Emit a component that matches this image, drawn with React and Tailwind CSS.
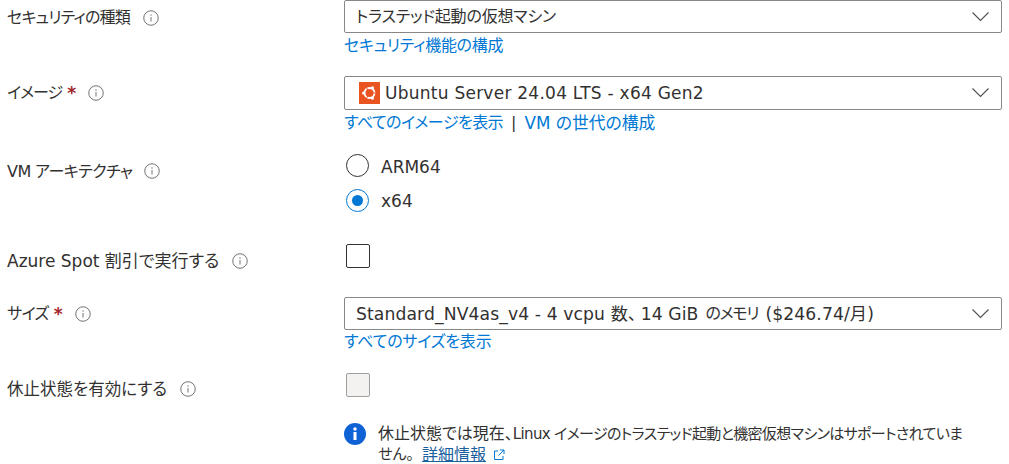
import React from "react";

const FONT = "font-['DejaVu_Sans','Noto_Sans_CJK_JP',sans-serif] [font-feature-settings:'palt']";

function Info({ className = "" }) {
  return (
    <svg width="16" height="16" viewBox="0 0 16 16" className={`shrink-0 ${className}`} fill="none">
      <circle cx="8" cy="8" r="7.25" stroke="#737373" strokeWidth="1" />
      <rect x="7.5" y="7" width="1" height="4.5" fill="#737373" />
      <rect x="7.4" y="4.4" width="1.2" height="1.2" fill="#737373" />
    </svg>
  );
}

function Star() {
  return <span className="ml-[5px] text-[#a4262c] text-[17px] font-bold leading-none">*</span>;
}

function Chevron() {
  return (
    <svg width="17" height="10" viewBox="0 0 17 10" fill="none" className="shrink-0">
      <path d="M0.5 0.5 L8.5 8.5 L16.5 0.5" stroke="#505050" strokeWidth="1.1" />
    </svg>
  );
}

function Select({ children, className = "" }) {
  return (
    <div className={`w-[658px] border border-[#8a8886] rounded-[2px] flex items-center justify-between pl-[11px] pr-[12px] bg-white ${className}`}>
      <div className="flex items-center whitespace-nowrap">{children}</div>
      <Chevron />
    </div>
  );
}

function Ubuntu() {
  return (
    <svg width="21" height="22" viewBox="0 0 21 22" className="ml-[3px] mr-[5px]">
      <rect width="21" height="22" fill="#e95420" />
      <circle cx="10.5" cy="11" r="5" fill="none" stroke="#fff" strokeWidth="1.9" />
      <g fill="none" stroke="#e95420" strokeWidth="1">
        <path d="M13.5 11H17" />
        <path d="M9 8.4L7.2 5.3" />
        <path d="M9 13.6L7.2 16.7" />
      </g>
      <circle cx="4.6" cy="11" r="1.6" fill="#fff" />
      <circle cx="13.4" cy="5.9" r="1.6" fill="#fff" />
      <circle cx="13.4" cy="16.1" r="1.6" fill="#fff" />
    </svg>
  );
}

function Radio({ checked, label, className = "", labelClass = "" }) {
  return (
    <div className={`flex items-start h-[23px] ${className}`}>
      <div className={`w-[23px] h-[23px] rounded-full border flex items-center justify-center ${checked ? "border-[#0078d4]" : "border-[#323130]"}`}>
        {checked && <div className="w-[11px] h-[11px] rounded-full bg-[#0078d4]" />}
      </div>
      <span className={`ml-[12px] leading-[23px] text-[17px] ${labelClass}`}>{label}</span>
    </div>
  );
}

export default function App() {
  return (
    <div className={`w-[1009px] h-[464px] overflow-hidden bg-white text-[#323130] text-[16px] leading-[22px] ${FONT}`}>
      <div className="flex h-[33px]">
        <div className="w-[344px] shrink-0 pl-[7px] pt-[2px] flex items-center">
          <span className="whitespace-nowrap tracking-[-0.8px]">セキュリティの種類</span>
          <Info className="ml-[13px]" />
        </div>
        <Select className="h-[33px]"><span className="tracking-[-0.2px]">トラステッド起動の仮想マシン</span></Select>
      </div>
      <div className="pl-[344px] h-[22px] mt-[2px] text-[#0078d4] tracking-[-0.27px]">セキュリティ機能の構成</div>

      <div className="flex h-[34px] mt-[19px]">
        <div className="w-[344px] shrink-0 pl-[7px] flex items-center">
          <span className="whitespace-nowrap tracking-[-1px]">イメージ</span>
          <Star />
          <Info className="ml-[12px]" />
        </div>
        <Select className="h-[34px]">
          <Ubuntu />
          <span className="text-[17px] tracking-[0.25px]">Ubuntu Server 24.04 LTS - x64 Gen2</span>
        </Select>
      </div>
      <div className="pl-[344px] h-[22px] mt-[2px] flex text-[#0078d4]">
        <span className="tracking-[-0.55px]">すべてのイメージを表示</span>
        <span className="text-[#323130] mx-[8px]">|</span>
        <span className="text-[16.8px]">VM の世代の構成</span>
      </div>

      <div className="flex mt-[20px]">
        <div className="w-[344px] shrink-0 pl-[7px] pt-[7px] flex items-start">
          <span className="whitespace-nowrap tracking-[-0.55px]">VM アーキテクチャ</span>
          <Info className="ml-[12px] mt-[2px]" />
        </div>
        <div className="pl-[2px]">
          <Radio label="ARM64" labelClass="pt-[2px]" />
          <Radio checked label="x64" className="mt-[12px]" labelClass="pt-[1px]" />
        </div>
      </div>

      <div className="flex mt-[32px] h-[24px]">
        <div className="w-[344px] shrink-0 pl-[7px] pt-[6px] flex items-start">
          <span className="whitespace-nowrap text-[17px]">Azure Spot 割引で実行する</span>
          <Info className="ml-[13px] mt-[3px]" />
        </div>
        <div className="ml-[2px] w-[24px] h-[24px] rounded-[2px] border border-[#323130]" />
      </div>

      <div className="flex h-[33px] mt-[29px]">
        <div className="w-[344px] shrink-0 pl-[7px] pt-[1px] flex items-center">
          <span className="whitespace-nowrap tracking-[-0.6px]">サイズ</span>
          <Star />
          <Info className="ml-[12px]" />
        </div>
        <Select className="h-[33px]">
          <span className="text-[17.2px] tracking-[0.1px]">Standard_NV4as_v4 - 4 vcpu 数、</span>
          <span className="text-[17.2px] tracking-[0.1px] ml-[4px]">14 GiB</span>
          <span className="text-[16px] tracking-[-1.2px] ml-[7px]">のメモリ</span>
          <span className="text-[17.2px] tracking-[0.1px] ml-[7px]">($246.74/月)</span>
        </Select>
      </div>
      <div className="pl-[344px] h-[22px] mt-[1px] text-[#0078d4] tracking-[-0.2px]">すべてのサイズを表示</div>

      <div className="flex mt-[20px] h-[24px]">
        <div className="w-[344px] shrink-0 pl-[7px] pt-[6px] flex items-start">
          <span className="whitespace-nowrap text-[16.5px]">休止状態を有効にする</span>
          <Info className="ml-[13px] mt-[2px]" />
        </div>
        <div className="ml-[2px] w-[24px] h-[24px] rounded-[2px] border border-[#a19f9d] bg-[#f3f2f1]" />
      </div>

      <div className="flex mt-[26px] pl-[344px]">
        <svg width="22" height="22" viewBox="0 0 22 22" className="shrink-0">
          <circle cx="11" cy="11" r="11" fill="#0f62d6" />
          <rect x="9.5" y="9" width="3" height="8" fill="#fff" />
          <circle cx="11" cy="6" r="1.7" fill="#fff" />
        </svg>
        <div className="ml-[12px] w-[620px] leading-[21px] whitespace-nowrap">
          <div className="h-[21px]">
            <span>休止状態では現在、</span>
            <span className="text-[15px] tracking-[-0.65px]">Linux イメージのトラステッド起動と機密仮想マシンはサポートされていま</span>
          </div>
          <div className="h-[21px] flex items-center">
            <span className="text-[15px]">せん。</span>
            <span className="ml-[8px] text-[#1a5f9e] underline">詳細情報</span>
            <svg width="12" height="12" viewBox="0 0 12 12" fill="none" className="ml-[7px]">
              <path d="M5 2H1.5v8.5H10V7M7 1h4v4M11 1L5.5 6.5" stroke="#0078d4" strokeWidth="1" />
            </svg>
          </div>
        </div>
      </div>
    </div>
  );
}
